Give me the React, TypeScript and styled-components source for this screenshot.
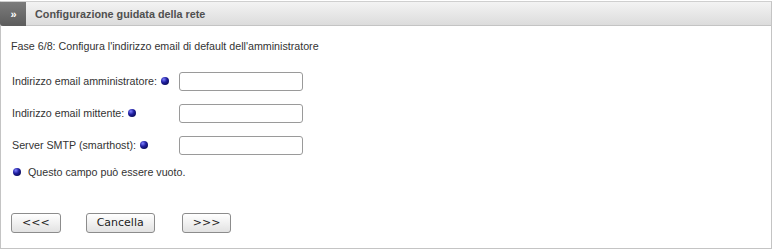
import React from 'react';
import styled, { createGlobalStyle } from 'styled-components';

const GlobalStyle = createGlobalStyle`
  body {
    margin: 0;
    background: #fff;
    font-family: "Liberation Sans", Arial, sans-serif;
  }
`;

const Panel = styled.div`
  width: 770px;
  height: 246px;
  margin-top: 1px;
  border: 1px solid #c4c4c4;
  border-top-color: #cfcfcf;
  display: flex;
  flex-direction: column;
`;

const Header = styled.div`
  height: 23px;
  display: flex;
  align-items: center;
  background: linear-gradient(#f3f3f3, #dcdcdc);
  border-bottom: 1px solid #c4c4c4;
`;

const Tab = styled.div`
  width: 26px;
  height: 24px;
  margin-left: -1px;
  margin-bottom: -1px;
  align-self: flex-start;
  border-bottom-left-radius: 3px;
  background: linear-gradient(#7c7c7c, #5c5c5c);
  color: #fff;
  font-weight: bold;
  font-size: 11px;
  display: flex;
  align-items: center;
  justify-content: center;
  letter-spacing: -1px;
`;

const Title = styled.span`
  margin-left: 9px;
  font-size: 10.8px;
  font-weight: bold;
  color: #505050;
`;

const Body = styled.div`
  padding: 13px 0 0 10px;
  font-size: 10.7px;
  color: #333;
`;

const Step = styled.div`
  line-height: 14px;
`;

const Form = styled.div`
  margin-top: 12px;
  margin-left: 1px;
  display: grid;
  grid-template-columns: 168px 124px;
  grid-auto-rows: 32px;
  align-items: center;
`;

const Label = styled.label`
  display: flex;
  align-items: center;
  gap: 4px;
`;

const Dot = styled.span`
  display: inline-block;
  width: 8px;
  height: 8px;
  border-radius: 50%;
  background: radial-gradient(circle at 35% 30%, #8080ff 0%, #2020a0 40%, #000030 100%);
`;

const Input = styled.input`
  box-sizing: border-box;
  width: 124px;
  height: 19px;
  margin-left: -1px;
  border: 1px solid #9a9a9a;
  border-radius: 3px;
  background: #fff;
  padding: 0 3px;
`;

const Note = styled.div`
  margin-top: 4px;
  margin-left: 2px;
  line-height: 14px;
  display: flex;
  align-items: center;
  gap: 7px;
`;

const Buttons = styled.div`
  margin-top: 34px;
  display: flex;
  gap: 25px;
`;

const Button = styled.button<{ $shift?: number }>`
  height: 20px;
  padding: 0 10px;
  margin-left: ${(p) => p.$shift ?? 0}px;
  font-family: "DejaVu Sans", Verdana, sans-serif;
  font-size: 11px;
  color: #222;
  border: 1px solid #8c8c8c;
  border-radius: 3px;
  background: linear-gradient(#ffffff, #e2e2e2);
  line-height: 18px;
`;

const fields = [
  'Indirizzo email amministratore:',
  'Indirizzo email mittente:',
  'Server SMTP (smarthost):',
];

export default function App() {
  return (
    <>
      <GlobalStyle />
      <Panel>
        <Header>
          <Tab>»</Tab>
          <Title>Configurazione guidata della rete</Title>
        </Header>
        <Body>
          <Step>Fase 6/8: Configura l'indirizzo email di default dell'amministratore</Step>
          <Form>
            {fields.map((f) => (
              <React.Fragment key={f}>
                <Label>
                  {f} <Dot />
                </Label>
                <Input type="text" />
              </React.Fragment>
            ))}
          </Form>
          <Note>
            <Dot />
            Questo campo può essere vuoto.
          </Note>
          <Buttons>
            <Button>&lt;&lt;&lt;</Button>
            <Button>Cancella</Button>
            <Button $shift={2}>&gt;&gt;&gt;</Button>
          </Buttons>
        </Body>
      </Panel>
    </>
  );
}
